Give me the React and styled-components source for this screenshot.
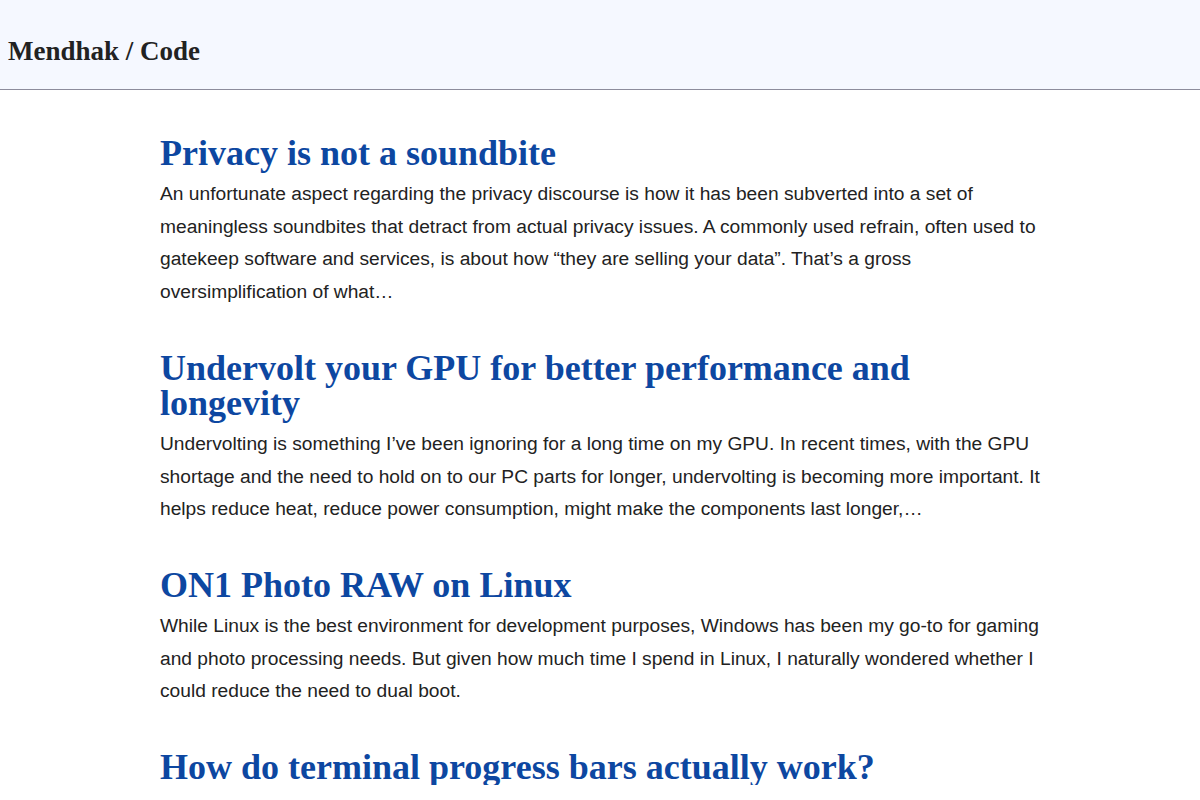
import React from "react";
import styled, { createGlobalStyle } from "styled-components";

const GlobalStyle = createGlobalStyle`
  body {
    margin: 0;
    background: #ffffff;
    font-family: "Liberation Sans", Arial, sans-serif;
  }
`;

const Header = styled.header`
  height: 89px;
  background-color: #f5f8ff;
  border-bottom: 1px solid #8c8c9c;
  display: flex;
  align-items: center;
  padding: 0 8px;
  box-sizing: content-box;
`;

const SiteTitle = styled.a`
  font-family: "Liberation Serif", "DejaVu Serif", serif;
  font-weight: bold;
  font-size: 27px;
  color: #222;
  text-decoration: none;
  margin-top: 14px;
`;

const Main = styled.main`
  width: 880px;
  margin: 0 auto;
  padding: 46px 0 0;
  display: flex;
  flex-direction: column;
  gap: 42px;
`;

const Post = styled.article`
  display: flex;
  flex-direction: column;
`;

const PostTitle = styled.h2`
  margin: 0;
  font-family: "Liberation Serif", "DejaVu Serif", serif;
  font-weight: bold;
  font-size: 36px;
  line-height: 35px;
  color: #0d47a1;
`;

const Summary = styled.p`
  margin: 7px 0 0;
  font-size: 19.2px;
  line-height: 32.7px;
  color: #222;
`;

const posts = [
  {
    title: "Privacy is not a soundbite",
    summary:
      "An unfortunate aspect regarding the privacy discourse is how it has been subverted into a set of meaningless soundbites that detract from actual privacy issues. A commonly used refrain, often used to gatekeep software and services, is about how \u201cthey are selling your data\u201d. That\u2019s a gross oversimplification of what\u2026",
  },
  {
    title: "Undervolt your GPU for better performance and longevity",
    summary:
      "Undervolting is something I\u2019ve been ignoring for a long time on my GPU. In recent times, with the GPU shortage and the need to hold on to our PC parts for longer, undervolting is becoming more important. It helps reduce heat, reduce power consumption, might make the components last longer,\u2026",
  },
  {
    title: "ON1 Photo RAW on Linux",
    summary:
      "While Linux is the best environment for development purposes, Windows has been my go-to for gaming and photo processing needs. But given how much time I spend in Linux, I naturally wondered whether I could reduce the need to dual boot.",
  },
  {
    title: "How do terminal progress bars actually work?",
    summary: "",
  },
];

export default function App() {
  return (
    <>
      <GlobalStyle />
      <Header>
        <SiteTitle href="#">Mendhak / Code</SiteTitle>
      </Header>
      <Main>
        {posts.map((post) => (
          <Post key={post.title}>
            <PostTitle>{post.title}</PostTitle>
            {post.summary && <Summary>{post.summary}</Summary>}
          </Post>
        ))}
      </Main>
    </>
  );
}
